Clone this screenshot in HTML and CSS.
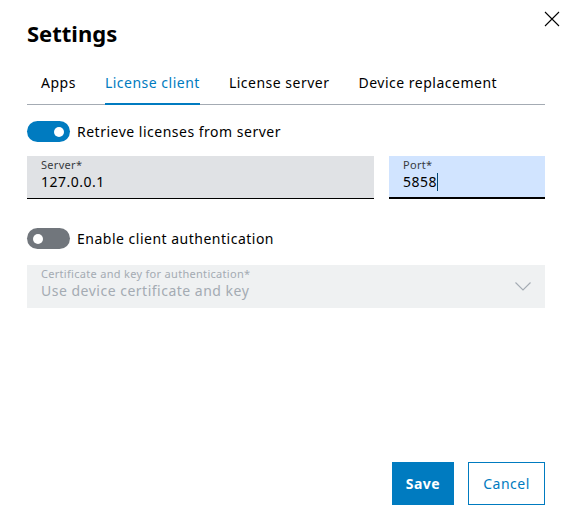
FILE: index.html
```html
<!DOCTYPE html>
<html lang="en">
<head>
<meta charset="utf-8">
<title>Settings</title>
<link rel="stylesheet" href="styles.css">
</head>
<body>
<div class="dialog">
  <button class="close" aria-label="Close">
    <svg width="16" height="16" viewBox="0 0 16 16"><path d="M1 1 L15 15 M15 1 L1 15" stroke="#000" stroke-width="1.1" fill="none"/></svg>
  </button>
  <h1 class="title">Settings</h1>
  <div class="tabs">
    <span class="tab">Apps</span>
    <span class="tab active">License client</span>
    <span class="tab">License server</span>
    <span class="tab">Device replacement</span>
  </div>
  <div class="content">
    <label class="toggle-row">
      <span class="toggle on"><span class="knob"></span></span>
      <span class="toggle-label">Retrieve licenses from server</span>
    </label>
    <div class="field-row">
      <div class="field server">
        <span class="field-label">Server*</span>
        <span class="field-value">127.0.0.1</span>
      </div>
      <div class="field port">
        <span class="field-label">Port*</span>
        <span class="field-value">5858<span class="caret"></span></span>
      </div>
    </div>
    <label class="toggle-row second">
      <span class="toggle off"><span class="knob"></span></span>
      <span class="toggle-label">Enable client authentication</span>
    </label>
    <div class="field select">
      <div class="select-text">
        <span class="field-label">Certificate and key for authentication*</span>
        <span class="field-value">Use device certificate and key</span>
      </div>
      <svg class="chevron" width="16" height="9" viewBox="0 0 16 9"><path d="M0.5 0.5 L8 8 L15.5 0.5" stroke="#a4abb3" stroke-width="1.1" fill="none"/></svg>
    </div>
  </div>
  <div class="footer">
    <button class="btn primary">Save</button>
    <button class="btn secondary">Cancel</button>
  </div>
</div>
</body>
</html>
```
FILE: styles.css
```css
* { box-sizing: border-box; }
html, body { margin: 0; padding: 0; background: #fff; }
body {
  font-family: "Noto Sans", "Liberation Sans", sans-serif;
  color: #000;
  width: 570px;
  height: 531px;
  letter-spacing: 0.5px;
}
.dialog {
  position: relative;
  height: 531px;
  padding: 0 25px 26px 27px;
  display: flex;
  flex-direction: column;
}
.close {
  position: absolute;
  top: 11px;
  right: 10px;
  width: 16px;
  height: 16px;
  padding: 0;
  border: 0;
  background: none;
  display: flex;
}
.title {
  margin: 0;
  padding-top: 18px;
  font-size: 22px;
  line-height: 30px;
  font-weight: 700;
  letter-spacing: 0;
}
.tabs {
  margin-top: 25px;
  display: flex;
  gap: 29px;
  padding-left: 14px;
  border-bottom: 1px solid #a4abb3;
}
.tab {
  font-size: 14px;
  line-height: 20px;
  padding: 0 0 10px;
  border-bottom: 2px solid transparent;
  margin-bottom: -1px;
  color: #000;
}
.tab.active {
  color: #007bc0;
  border-bottom-color: #007bc0;
}
.content {
  display: flex;
  flex-direction: column;
}
.toggle-row {
  display: flex;
  align-items: center;
  gap: 7px;
  margin-top: 16px;
  height: 21px;
}
.toggle-row.second { margin-top: 29px; }
.toggle {
  width: 43px;
  height: 21px;
  border-radius: 11px;
  display: flex;
  align-items: center;
  padding: 0 6px;
}
.toggle.on { background: #007bc0; justify-content: flex-end; }
.toggle.off { background: #71767c; justify-content: flex-start; }
.knob {
  width: 10px;
  height: 10px;
  border-radius: 50%;
  background: #fff;
}
.toggle-label {
  font-size: 14px;
  line-height: 20px;
}
.field-row {
  display: flex;
  gap: 15px;
  margin-top: 14px;
}
.field {
  height: 43px;
  padding: 2px 14px 0;
  display: flex;
  flex-direction: column;
}
.field-label {
  font-size: 11px;
  line-height: 14px;
  color: #383b3e;
  letter-spacing: 0.3px;
}
.field-value {
  font-size: 14px;
  line-height: 20px;
  color: #000;
}
.server {
  flex: 0 0 347px;
  background: #e0e2e5;
  border-bottom: 1px solid #000;
}
.port {
  flex: 1;
  background: #d1e4ff;
  border-bottom: 2px solid #000;
}
.caret {
  display: inline-block;
  width: 1px;
  height: 18px;
  background: #004975;
  vertical-align: -4px;
  margin-left: 0;
}
.select {
  margin-top: 16px;
  background: #eff1f2;
  flex-direction: row;
  align-items: center;
  justify-content: space-between;
  padding: 2px 14px 0;
}
.select-text {
  display: flex;
  flex-direction: column;
  align-self: flex-start;
}
.select .field-label,
.select .field-value { color: #a4abb3; }
.chevron { margin-bottom: 2px; }
.footer {
  margin-top: auto;
  display: flex;
  justify-content: flex-end;
  gap: 14px;
}
.btn {
  height: 43px;
  font-family: inherit;
  font-size: 14px;
  letter-spacing: 0.5px;
  padding: 0;
  border-radius: 0;
}
.btn.primary {
  background: #007bc0;
  color: #fff;
  font-weight: 700;
  border: 1px solid #007bc0;
  width: 62px;
}
.btn.secondary {
  background: #fff;
  color: #007bc0;
  border: 1px solid #007bc0;
  width: 77px;
}
```
